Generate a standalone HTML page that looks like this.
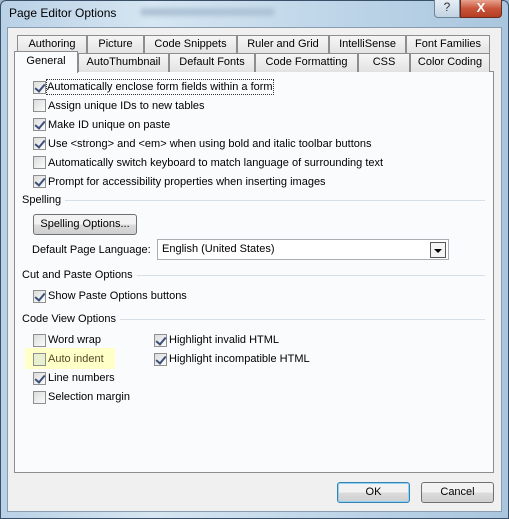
<!DOCTYPE html>
<html><head><style>
*{margin:0;padding:0;box-sizing:border-box}
body{width:509px;height:519px;position:relative;overflow:hidden;font-family:"Liberation Sans",sans-serif;font-size:11px;color:#000;background:#9fb8cc}
.a{position:absolute;white-space:nowrap}
.frame{left:0;top:0;width:509px;height:519px;border:1px solid #3a5068;border-radius:6px 6px 0 0;background:linear-gradient(90deg,#b9d1e6,#d6e6f2 30%,#c2d8ea 60%,#a9c6de)}
.client{left:7px;top:27px;width:495px;height:485px;background:#f0f0f0;border:1px solid #8a9cae}
.panel{left:14px;top:71px;width:480px;height:402px;background:#fafbfc;border:1px solid #8d8d8d}
.tab{position:absolute;height:19px;border:1px solid #8d8d8d;border-bottom:none;background:linear-gradient(#f6f6f6,#e2e2e2);text-align:center;line-height:17px;font-size:11px}
.sel{background:#fafbfc;height:22px;z-index:2}
.cb{position:absolute;width:13px;height:13px;border:1px solid #8e8f8f;background:linear-gradient(135deg,#dcdcdc,#fbfbfb)}
.cb.on::after{content:"";position:absolute;left:3px;top:0px;width:4px;height:8px;border:solid #3a4f7a;border-width:0 2px 2px 0;transform:rotate(40deg)}
.lbl{position:absolute;white-space:nowrap;line-height:14px}
.grp{position:absolute;left:22px;width:463px;height:14px;line-height:14px}
.grp span{background:#fafbfc;padding-right:4px;position:relative}
.grp::before{content:"";position:absolute;left:0;right:0;top:7px;border-top:1px solid #d5dfe5}
.btn{position:absolute;border:1px solid #707070;border-radius:3px;background:linear-gradient(#f2f2f2 50%,#dcdcdc 50%,#cfcfcf);text-align:center;line-height:19px}
</style></head><body>
<div class="a frame"></div>
<div class="a" style="left:9px;top:6px;font-size:12px">Page Editor Options</div>
<div class="a" style="left:140px;top:8px;width:135px;height:8px;background:#aec4d6;border-radius:5px;filter:blur(2px)"></div>
<div class="a" style="left:434px;top:0;width:26px;height:18px;border:1px solid #6e8498;border-top:none;border-radius:0 0 0 4px;background:linear-gradient(#e6eef6,#c2d3e2);text-align:center;font-size:12px;color:#333">?</div>
<div class="a" style="left:460px;top:0;width:42px;height:18px;border:1px solid #6b2a1e;border-top:none;border-radius:0 0 4px 0;background:linear-gradient(#e8a48f,#c8543a 50%,#b53d22);text-align:center;color:#fff;font-weight:bold;font-size:13px;line-height:16px">X</div>
<div class="a client"></div>
<div class="tab" style="left:17px;top:35px;width:70px">Authoring</div>
<div class="tab" style="left:87px;top:35px;width:57px">Picture</div>
<div class="tab" style="left:144px;top:35px;width:93px">Code Snippets</div>
<div class="tab" style="left:237px;top:35px;width:92px">Ruler and Grid</div>
<div class="tab" style="left:329px;top:35px;width:77px">IntelliSense</div>
<div class="tab" style="left:406px;top:35px;width:84px">Font Families</div>
<div class="a panel"></div>
<div class="tab sel" style="left:14px;top:51px;width:64px;line-height:18px">General</div>
<div class="tab" style="left:78px;top:53px;width:91px">AutoThumbnail</div>
<div class="tab" style="left:169px;top:53px;width:86px">Default Fonts</div>
<div class="tab" style="left:255px;top:53px;width:103px">Code Formatting</div>
<div class="tab" style="left:358px;top:53px;width:52px">CSS</div>
<div class="tab" style="left:410px;top:53px;width:80px">Color Coding</div>

<div class="cb on" style="left:33px;top:81px"></div><div class="lbl" style="left:47px;top:80px;outline:1px dotted #333">Automatically enclose form fields within a form</div>
<div class="cb" style="left:33px;top:99px"></div><div class="lbl" style="left:48px;top:99px">Assign unique IDs to new tables</div>
<div class="cb on" style="left:33px;top:118px"></div><div class="lbl" style="left:48px;top:118px">Make ID unique on paste</div>
<div class="cb on" style="left:33px;top:137px"></div><div class="lbl" style="left:48px;top:137px">Use &lt;strong&gt; and &lt;em&gt; when using bold and italic toolbar buttons</div>
<div class="cb" style="left:33px;top:156px"></div><div class="lbl" style="left:48px;top:156px">Automatically switch keyboard to match language of surrounding text</div>
<div class="cb on" style="left:33px;top:175px"></div><div class="lbl" style="left:48px;top:175px">Prompt for accessibility properties when inserting images</div>

<div class="grp" style="top:193px"><span>Spelling</span></div>
<div class="btn" style="left:33px;top:214px;width:104px;height:21px">Spelling Options...</div>
<div class="lbl" style="left:32px;top:243px">Default Page Language:</div>
<div class="a" style="left:157px;top:239px;width:292px;height:21px;border:1px solid #abadb3;background:#fff;padding:2px 4px;line-height:15px">English (United States)</div>
<div class="a" style="left:430px;top:242px;width:16px;height:16px;border:1px solid #555;background:#f4f4f4"></div>
<div class="a" style="left:434px;top:249px;width:0;height:0;border-left:4px solid transparent;border-right:4px solid transparent;border-top:4px solid #000"></div>

<div class="grp" style="top:268px"><span>Cut and Paste Options</span></div>
<div class="cb on" style="left:33px;top:290px"></div><div class="lbl" style="left:48px;top:289px">Show Paste Options buttons</div>

<div class="grp" style="top:312px"><span>Code View Options</span></div>
<div class="a" style="left:25px;top:348px;width:90px;height:21px;background:#ffffc8"></div>
<div class="cb" style="left:33px;top:334px"></div><div class="lbl" style="left:48px;top:333px">Word wrap</div>
<div class="cb" style="left:33px;top:353px;background:#e8f0d0"></div><div class="lbl" style="left:48px;top:352px;color:#5a4a2a">Auto indent</div>
<div class="cb on" style="left:33px;top:372px"></div><div class="lbl" style="left:48px;top:371px">Line numbers</div>
<div class="cb" style="left:33px;top:391px"></div><div class="lbl" style="left:48px;top:390px">Selection margin</div>
<div class="cb on" style="left:154px;top:334px"></div><div class="lbl" style="left:169px;top:333px">Highlight invalid HTML</div>
<div class="cb on" style="left:154px;top:353px"></div><div class="lbl" style="left:169px;top:352px">Highlight incompatible HTML</div>

<div class="btn" style="left:337px;top:482px;width:73px;height:21px;border-color:#3c7fb1;box-shadow:inset 0 0 0 1px #8fd3f5">OK</div>
<div class="btn" style="left:421px;top:482px;width:73px;height:21px">Cancel</div>
</body></html>
